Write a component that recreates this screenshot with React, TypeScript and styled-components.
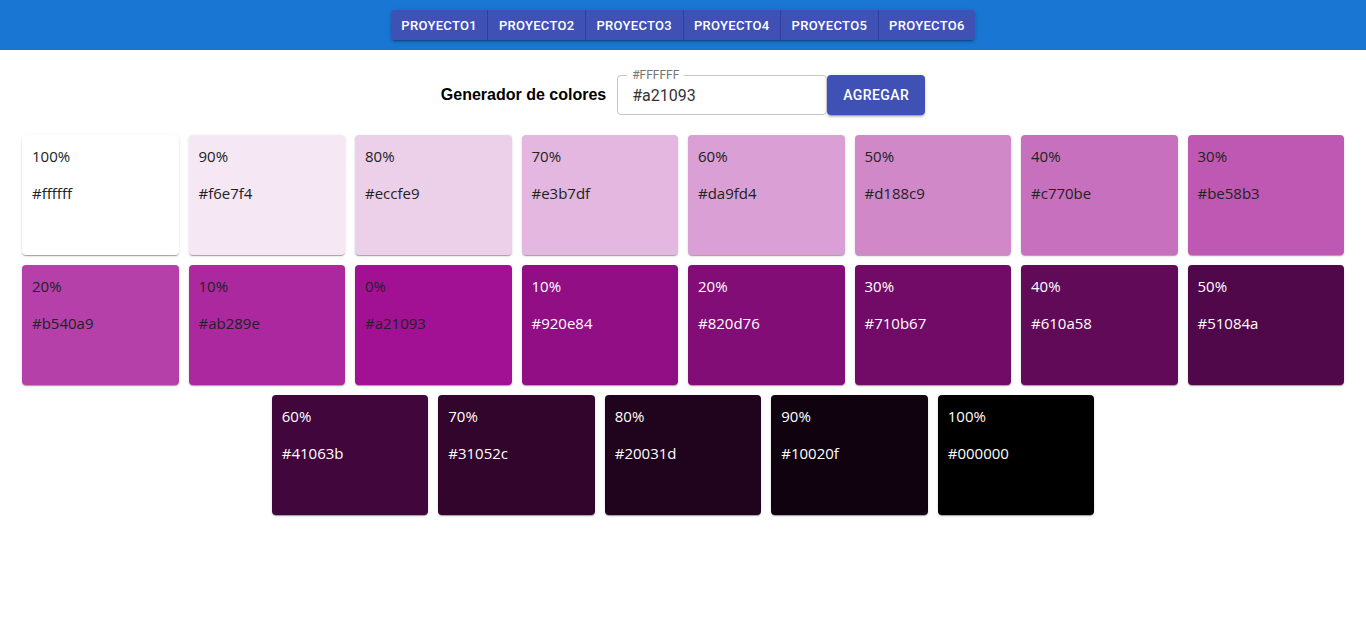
import React from "react";
import styled, { createGlobalStyle } from "styled-components";

const Global = createGlobalStyle`
  body { margin: 0; background: #fff; font-family: Roboto, "Liberation Sans", sans-serif; }
  * { box-sizing: border-box; }
`;

const Header = styled.header`
  height: 50px;
  background: #1976d2;
  display: flex;
  justify-content: center;
  align-items: flex-start;
  padding-top: 10px;
`;

const Group = styled.div`
  display: flex;
  border-radius: 4px;
  box-shadow: 0 3px 1px -2px rgba(0,0,0,0.2), 0 2px 2px 0 rgba(0,0,0,0.14), 0 1px 5px 0 rgba(0,0,0,0.12);
  overflow: hidden;
`;

const NavButton = styled.button<{ $last?: boolean }>`
  height: 30px;
  padding: 0 10.5px;
  border: none;
  border-right: ${(p) => (p.$last ? "none" : "1px solid #303f9f")};
  background: #3f51b5;
  color: #fff;
  font-family: Roboto, sans-serif;
  font-weight: 500;
  font-size: 13px;
  letter-spacing: 0.3px;
  text-transform: uppercase;
  cursor: pointer;
`;

const Form = styled.div`
  display: flex;
  justify-content: center;
  align-items: center;
  margin-top: 25px;
  height: 40px;
`;

const Title = styled.h3`
  margin: 0 11px 0 0;
  font-family: "Liberation Sans", Arial, sans-serif;
  font-weight: 700;
  font-size: 16px;
  color: #000;
`;

const Field = styled.fieldset`
  position: relative;
  width: 210px;
  height: 40px;
  margin: 0;
  padding: 0 14px;
  border: 1px solid #c4c4c4;
  border-radius: 4px;
  display: flex;
  align-items: center;
`;

const Label = styled.span`
  position: absolute;
  top: -8px;
  left: 9px;
  padding: 0 5px;
  background: #fff;
  font-size: 12px;
  color: #757575;
  line-height: 14px;
`;

const Input = styled.input`
  border: none;
  outline: none;
  width: 100%;
  font-family: Roboto, sans-serif;
  font-size: 16px;
  color: #333;
  padding: 0;
  background: transparent;
`;

const AddButton = styled.button`
  width: 98px;
  height: 40px;
  border: none;
  border-radius: 4px;
  background: #3f51b5;
  color: #fff;
  font-family: Roboto, sans-serif;
  font-weight: 500;
  font-size: 14px;
  letter-spacing: 0.4px;
  box-shadow: 0 3px 1px -2px rgba(0,0,0,0.2), 0 2px 2px 0 rgba(0,0,0,0.14), 0 1px 5px 0 rgba(0,0,0,0.12);
`;

const Grid = styled.div`
  display: flex;
  flex-wrap: wrap;
  justify-content: center;
  padding: 15px 17px 0;
`;

const Card = styled.div<{ $bg: string; $light: boolean }>`
  flex: 0 0 calc(12.5% - 10px);
  height: 120px;
  margin: 5px;
  padding: 11px 10px;
  border-radius: 4px;
  background: ${(p) => p.$bg};
  color: ${(p) => (p.$light ? "#fff" : "#222")};
  font-family: "Open Sans", "Noto Sans", sans-serif;
  font-size: 15px;
  box-shadow: 0 2px 1px -1px rgba(0,0,0,0.2), 0 1px 1px 0 rgba(0,0,0,0.14), 0 1px 3px 0 rgba(0,0,0,0.12);
`;

const Line = styled.p`
  margin: 0 0 17px;
  line-height: 20px;
`;

const colors: [string, string, boolean][] = [
  ["100%", "#ffffff", false],
  ["90%", "#f6e7f4", false],
  ["80%", "#eccfe9", false],
  ["70%", "#e3b7df", false],
  ["60%", "#da9fd4", false],
  ["50%", "#d188c9", false],
  ["40%", "#c770be", false],
  ["30%", "#be58b3", false],
  ["20%", "#b540a9", false],
  ["10%", "#ab289e", false],
  ["0%", "#a21093", false],
  ["10%", "#920e84", true],
  ["20%", "#820d76", true],
  ["30%", "#710b67", true],
  ["40%", "#610a58", true],
  ["50%", "#51084a", true],
  ["60%", "#41063b", true],
  ["70%", "#31052c", true],
  ["80%", "#20031d", true],
  ["90%", "#10020f", true],
  ["100%", "#000000", true],
];

export default function App() {
  const projects = ["PROYECTO1", "PROYECTO2", "PROYECTO3", "PROYECTO4", "PROYECTO5", "PROYECTO6"];
  return (
    <>
      <Global />
      <Header>
        <Group>
          {projects.map((p, i) => (
            <NavButton key={p} $last={i === projects.length - 1}>{p}</NavButton>
          ))}
        </Group>
      </Header>
      <Form>
        <Title>Generador de colores</Title>
        <Field>
          <Label>#FFFFFF</Label>
          <Input defaultValue="#a21093" />
        </Field>
        <AddButton>AGREGAR</AddButton>
      </Form>
      <Grid>
        {colors.map(([pct, hex, light], i) => (
          <Card key={i} $bg={hex} $light={light}>
            <Line>{pct}</Line>
            <Line>{hex}</Line>
          </Card>
        ))}
      </Grid>
    </>
  );
}
